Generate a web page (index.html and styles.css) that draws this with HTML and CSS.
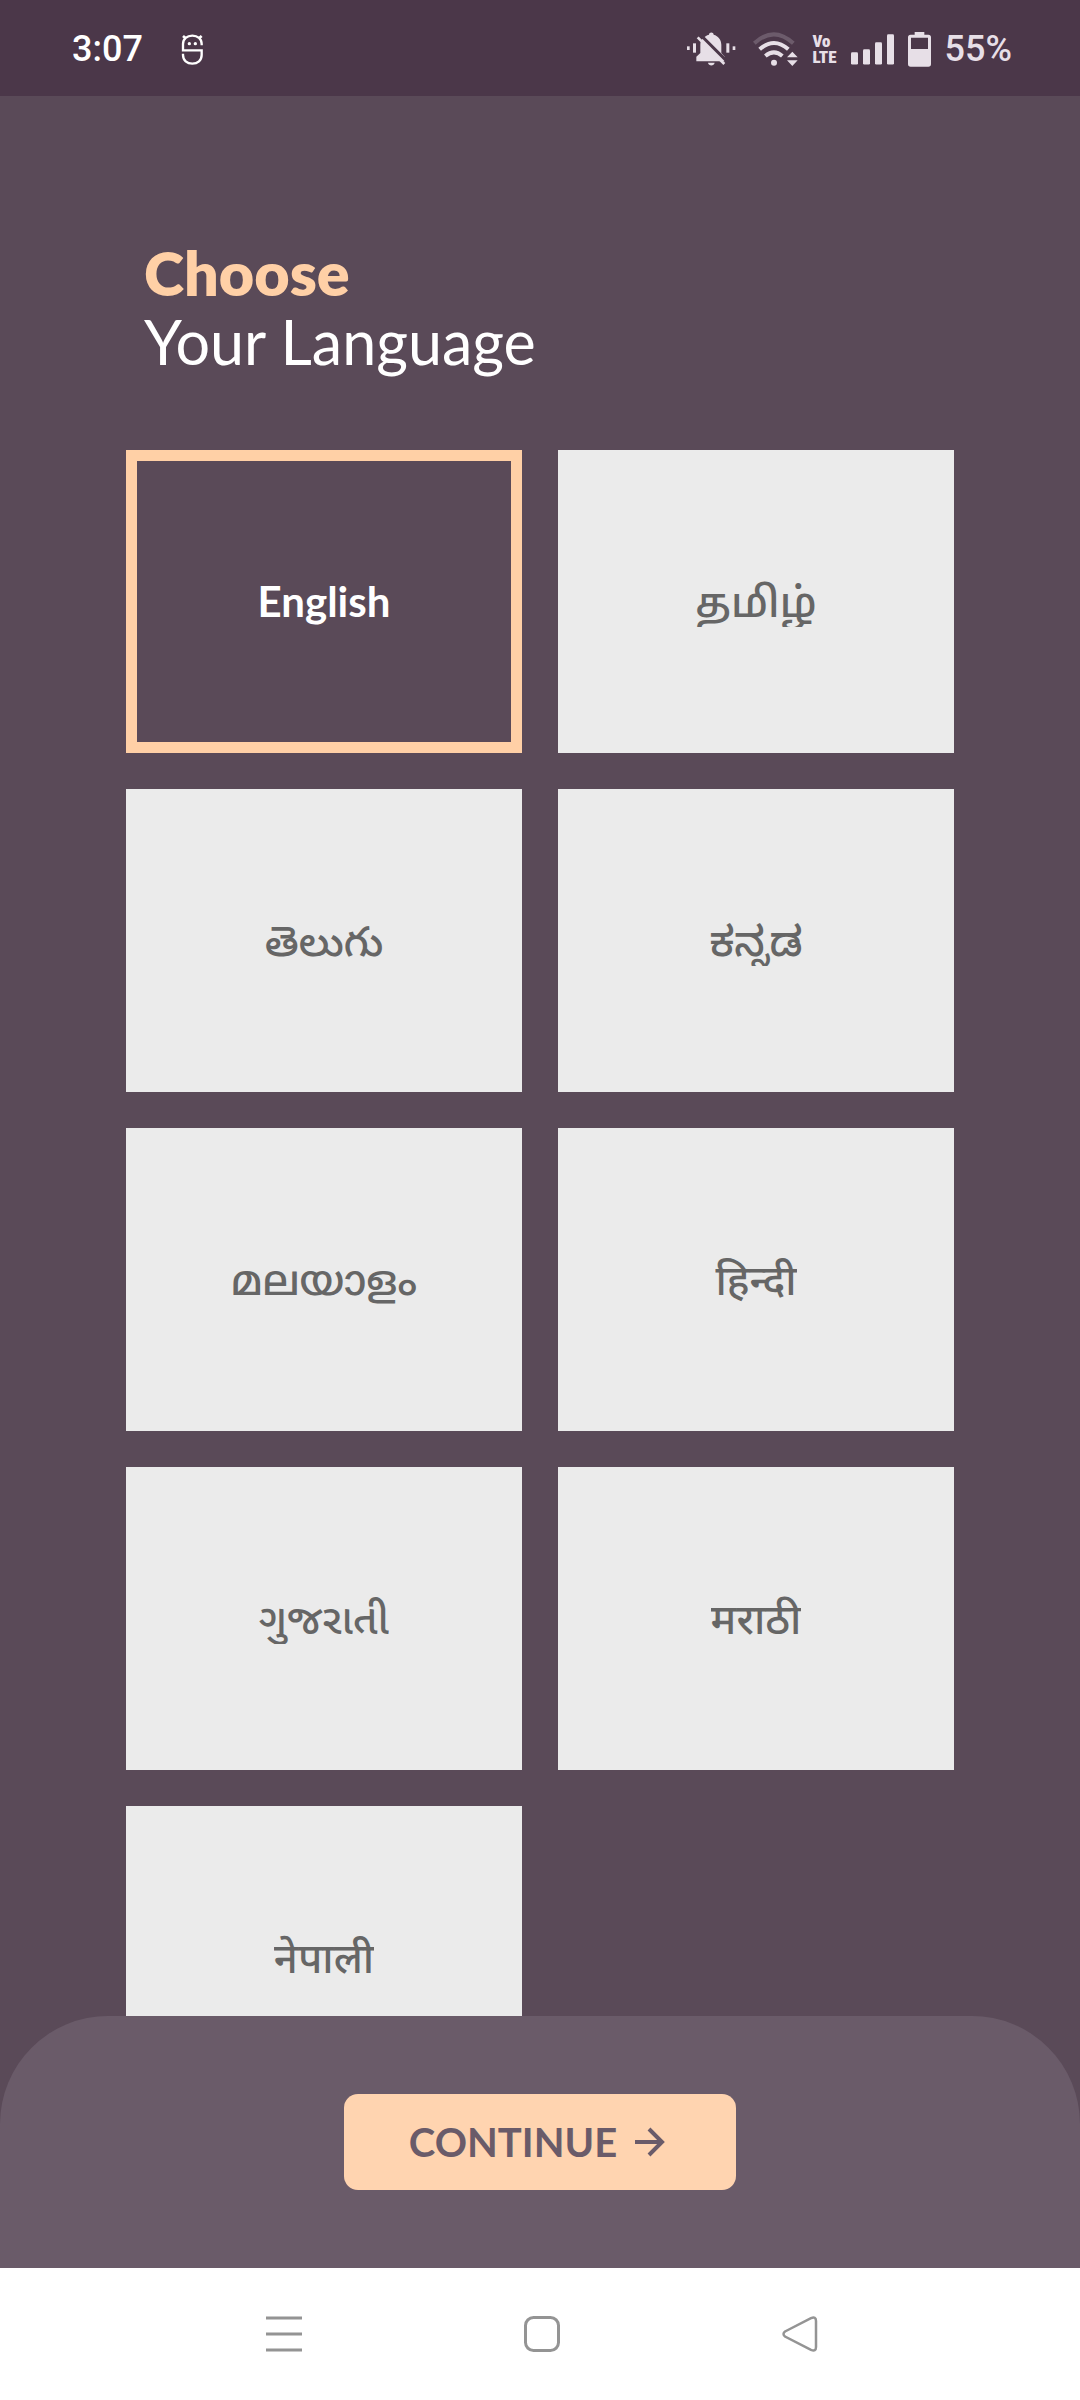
FILE: index.html
```html
<!DOCTYPE html>
<html lang="en">
<head>
    <meta charset="UTF-8">
    <meta name="viewport" content="width=device-width, initial-scale=1.0">
    <title>Choose Your Language</title>
    <link rel="stylesheet" href="styles.css">
</head>
<body>

    <!-- Status bar -->
    <header class="status-bar">
        <div class="status-left">
            <span class="time">3:07</span>
            <svg class="icon-app" viewBox="543 97 69 93" aria-hidden="true">
                <path d="M605 131V127C605 112 593 102 577 102S549 112 549 127V146H605V160C605 176 593 186 577 186S549 176 549 160V156" fill="none" stroke="#fff" stroke-width="7"/>
                <path d="M549 103l8 7M605 103l-8 7" stroke="#fff" stroke-width="8"/>
                <circle cx="568" cy="126" r="5" fill="#fff"/>
                <circle cx="586" cy="126" r="5" fill="#fff"/>
            </svg>
        </div>
        <div class="status-right">
            <svg class="icon-bell" viewBox="80 92 147 102" aria-hidden="true">
                <g fill="#e7dfe7">
                    <rect x="80" y="135" width="8" height="11"/>
                    <rect x="98" y="126" width="9" height="28"/>
                    <rect x="198" y="126" width="9" height="28"/>
                    <rect x="217" y="135" width="8" height="11"/>
                    <path d="M146 100C146 91 160 91 160 100C174 104 183 115 183 130V155L193 166V180H108V166L120 155V130C120 115 132 104 146 100Z"/>
                    <path d="M143 184H163C161 195 145 195 143 184Z"/>
                </g>
                <path d="M118 98L206 186" stroke="#4b3749" stroke-width="9"/>
                <path d="M112 108L192 188" stroke="#e7dfe7" stroke-width="8"/>
            </svg>
            <svg class="icon-wifi" viewBox="257 90 144 102" aria-hidden="true">
                <g fill="none" stroke="#e7dfe7" stroke-width="12">
                    <path d="M270 124Q328 70 387 124" stroke="#6c5b6b"/>
                    <path d="M286 142Q329 104 372 142"/>
                    <path d="M303 162Q329 140 354 162"/>
                </g>
                <g fill="#e7dfe7">
                    <circle cx="329" cy="182" r="9"/>
                    <path d="M384 149L400 166H368ZM384 192L400 175H368Z"/>
                </g>
            </svg>
            <span class="volte"><span>Vo</span><span>LTE</span></span>
            <svg class="icon-signal" viewBox="567 98 129 92" aria-hidden="true">
                <g fill="#e7dfe7">
                    <rect x="567" y="152" width="21" height="37" rx="4"/>
                    <rect x="603" y="143" width="21" height="46" rx="4"/>
                    <rect x="639" y="122" width="21" height="67" rx="4"/>
                    <rect x="675" y="98" width="21" height="91" rx="4"/>
                </g>
            </svg>
            <svg class="icon-battery" viewBox="747 90 69 105" aria-hidden="true">
                <path fill="#e7dfe7" fill-rule="evenodd" d="M767 90H796V98H808Q816 98 816 106V186Q816 194 808 194H755Q747 194 747 186V106Q747 98 755 98H767ZM756 107V141H807V107Z"/>
            </svg>
            <span>55%</span>
        </div>
    </header>

    <!-- Language list -->
    <main class="content">
        <h1 class="title"><strong>Choose</strong><span>Your Language</span></h1>

        <form class="language-grid" id="languageForm">
            <label class="language">
                <input type="radio" name="language" value="en" checked>
                <span class="language-name">English</span>
            </label>
            <label class="language">
                <input type="radio" name="language" value="ta">
                <span class="language-name" lang="ta">தமிழ்</span>
            </label>
            <label class="language">
                <input type="radio" name="language" value="te">
                <span class="language-name" lang="te">తెలుగు</span>
            </label>
            <label class="language">
                <input type="radio" name="language" value="kn">
                <span class="language-name" lang="kn">ಕನ್ನಡ</span>
            </label>
            <label class="language">
                <input type="radio" name="language" value="ml">
                <span class="language-name" lang="ml">മലയാളം</span>
            </label>
            <label class="language">
                <input type="radio" name="language" value="hi">
                <span class="language-name" lang="hi">हिन्दी</span>
            </label>
            <label class="language">
                <input type="radio" name="language" value="gu">
                <span class="language-name" lang="gu">ગુજરાતી</span>
            </label>
            <label class="language">
                <input type="radio" name="language" value="mr">
                <span class="language-name" lang="mr">मराठी</span>
            </label>
            <label class="language">
                <input type="radio" name="language" value="ne">
                <span class="language-name" lang="ne">नेपाली</span>
            </label>
        </form>
    </main>

    <!-- Continue panel -->
    <div class="bottom-panel">
        <button class="continue-button" type="submit" form="languageForm">
            CONTINUE
            <svg class="icon-arrow" viewBox="0 0 30 30" aria-hidden="true">
                <path d="M0 15H27M14 2L27 15L14 28" fill="none" stroke="#6a5b69" stroke-width="4"/>
            </svg>
        </button>
    </div>

    <!-- Navigation bar -->
    <nav class="nav-bar">
        <button type="button" aria-label="Recent apps">
            <svg viewBox="0 0 36 36"><path d="M0 2H36M0 18H36M0 34H36" fill="none" stroke="#949494" stroke-width="3"/></svg>
        </button>
        <button type="button" aria-label="Home">
            <svg viewBox="0 0 36 36"><rect x="1.5" y="1.5" width="33" height="33" rx="8" fill="none" stroke="#949494" stroke-width="3"/></svg>
        </button>
        <button type="button" aria-label="Back">
            <svg viewBox="0 0 36 36"><path d="M3 15.500L29 2.200Q34 0 34 5V31Q34 36 29 33.800L3 20.500Q0 18 3 15.500Z" fill="none" stroke="#949494" stroke-width="2.500"/></svg>
        </button>
    </nav>

</body>
</html>
```
FILE: styles.css
```css
* {
    box-sizing: border-box;
}

body {
    margin: 0;
    height: 100vh;
    display: flex;
    flex-direction: column;
    background-color: #5a4a58;
    font-family: Lato, "Noto Sans", sans-serif;
}

svg {
    display: block;
}

button {
    border: none;
    cursor: pointer;
}

.status-bar {
    height: 96px;
    flex-shrink: 0;
    padding: 2px 68px 0 72px;
    display: flex;
    justify-content: space-between;
    align-items: center;
    background-color: #4b3749;
    color: #e7dfe7;
    font-family: Roboto, sans-serif;
    font-size: 36px;
    font-weight: 500;
    line-height: 40px;
}

.status-left {
    display: flex;
    align-items: center;
    gap: 38px;
}

.status-right {
    display: flex;
    align-items: center;
    gap: 14px;
}

.time {
    color: #fff;
}

.volte {
    display: flex;
    flex-direction: column;
    font-family: "Roboto Condensed", "Liberation Sans Narrow", Roboto, sans-serif;
    font-size: 17px;
    font-weight: 900;
    line-height: 16px;
}

.icon-app {
    width: 23px;
    height: 31px;
}

.icon-bell {
    width: 49px;
    height: 34px;
}

.icon-wifi {
    width: 48px;
    height: 34px;
}

.icon-signal {
    width: 43px;
    height: 31px;
}

.icon-battery {
    width: 23px;
    height: 35px;
}

.content {
    flex: 1;
    min-height: 0;
    padding: 142px 126px 36px;
    overflow-y: auto;
    scrollbar-width: none;
}

.title {
    margin: 0 0 74px;
    padding-left: 18px;
    color: #fff;
    font-size: 61px;
    font-weight: 400;
    line-height: 69px;
}

.title strong,
.title span {
    display: block;
}

.title strong {
    color: #ffd0a6;
    font-weight: 800;
}

.language-grid {
    display: grid;
    grid-template-columns: 1fr 1fr;
    gap: 36px;
}

.language {
    height: 303px;
    display: flex;
    justify-content: center;
    align-items: center;
    background-color: #ebebeb;
    color: #666;
    font-size: 42px;
    font-weight: 500;
    cursor: pointer;
}

.language input {
    appearance: none;
    width: 0;
    height: 0;
    margin: 0;
}

.language-name {
    font-family: Lato, "Noto Sans Tamil", "Noto Sans Telugu", "Noto Sans Kannada", "Noto Sans Malayalam", "Noto Sans Devanagari", "Noto Sans Gujarati", "Noto Sans", sans-serif;
    line-height: 51px;
    overflow: hidden;
}

.language:has(input:checked) {
    border: 11px solid #ffd0a6;
    background-color: transparent;
    color: #fff;
    font-weight: 700;
}

.bottom-panel {
    flex-shrink: 0;
    padding: 78px 0;
    display: flex;
    justify-content: center;
    background-color: #6a5b69;
    border-radius: 108px 108px 0 0;
}

.continue-button {
    height: 96px;
    padding: 0 71px 0 65px;
    display: flex;
    align-items: center;
    gap: 18px;
    background-color: #ffd4b0;
    border-radius: 14px;
    color: #6a5b69;
    font-family: inherit;
    font-size: 40px;
    font-weight: 700;
}

.icon-arrow {
    width: 30px;
    height: 30px;
}

.nav-bar {
    height: 132px;
    flex-shrink: 0;
    padding-left: 4px;
    display: flex;
    justify-content: center;
    align-items: center;
    gap: 222px;
    background-color: #fff;
}

.nav-bar button {
    width: 36px;
    height: 36px;
    padding: 0;
    background: none;
}
```
